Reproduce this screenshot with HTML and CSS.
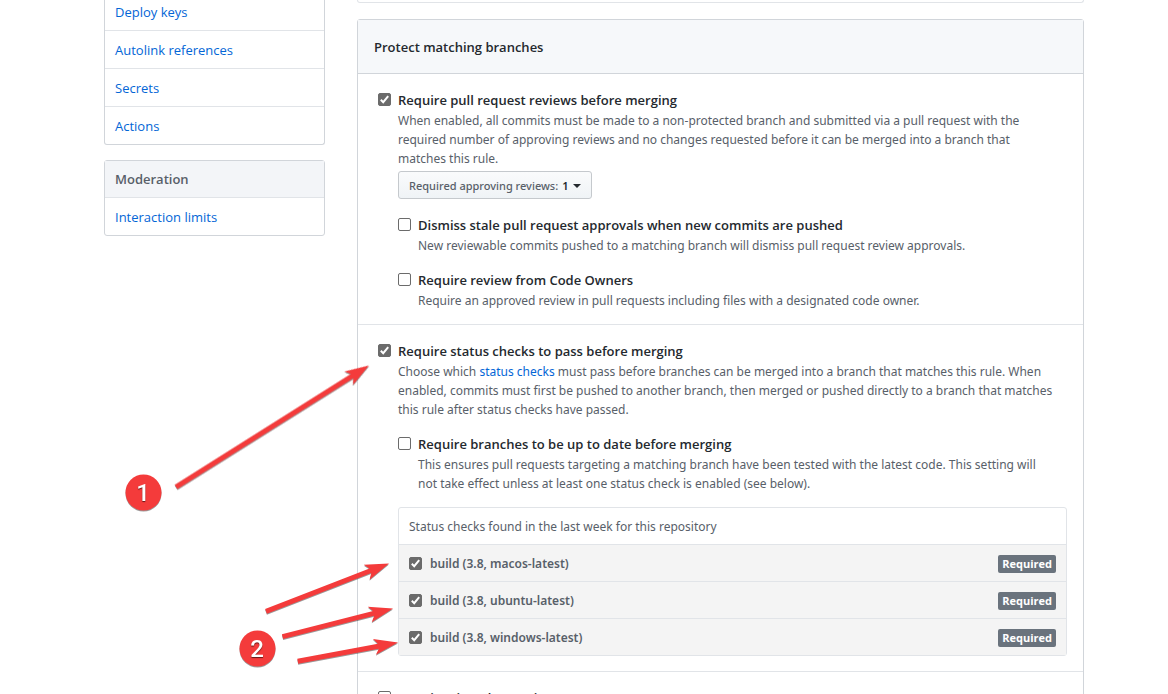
FILE: index.html
```html
<!DOCTYPE html>
<html lang="en">
<head>
<meta charset="utf-8">
<title>Branch protection rule</title>
<link rel="stylesheet" href="styles.css">
</head>
<body>
<div class="page">
  <aside class="sidebar">
    <nav class="menu menu-continued" aria-label="Settings">
      <a class="menu-item" href="#keys">Deploy keys</a>
      <a class="menu-item" href="#autolinks">Autolink references</a>
      <a class="menu-item" href="#secrets">Secrets</a>
      <a class="menu-item" href="#actions">Actions</a>
    </nav>
    <nav class="menu" aria-label="Moderation">
      <h3 class="menu-heading">Moderation</h3>
      <a class="menu-item" href="#limits">Interaction limits</a>
    </nav>
  </aside>

  <main class="content">
    <div class="previous-box"></div>
    <section class="box">
      <h2 class="box-header">Protect matching branches</h2>

      <div class="rule">
        <input class="check" type="checkbox" id="reviews" checked>
        <div class="rule-body">
          <label class="rule-label" for="reviews">Require pull request reviews before merging</label>
          <p class="note">When enabled, all commits must be made to a non-protected branch and submitted via a pull request with the<br>required number of approving reviews and no changes requested before it can be merged into a branch that<br>matches this rule.</p>
          <button class="select-button" type="button"><span>Required approving reviews:</span> <b class="count">1</b><i class="caret"></i></button>
          <div class="subrule">
            <input class="check" type="checkbox" id="stale">
            <div class="rule-body">
              <label class="rule-label" for="stale">Dismiss stale pull request approvals when new commits are pushed</label>
              <p class="note">New reviewable commits pushed to a matching branch will dismiss pull request review approvals.</p>
            </div>
          </div>
          <div class="subrule">
            <input class="check" type="checkbox" id="owners">
            <div class="rule-body">
              <label class="rule-label" for="owners">Require review from Code Owners</label>
              <p class="note">Require an approved review in pull requests including files with a designated code owner.</p>
            </div>
          </div>
        </div>
      </div>

      <div class="rule">
        <input class="check" type="checkbox" id="status" checked>
        <div class="rule-body">
          <label class="rule-label" for="status">Require status checks to pass before merging</label>
          <p class="note">Choose which <a class="link" href="#checks">status checks</a> must pass before branches can be merged into a branch that matches this rule. When<br>enabled, commits must first be pushed to another branch, then merged or pushed directly to a branch that matches<br>this rule after status checks have passed.</p>
          <div class="subrule">
            <input class="check" type="checkbox" id="uptodate">
            <div class="rule-body">
              <label class="rule-label" for="uptodate">Require branches to be up to date before merging</label>
              <p class="note">This ensures pull requests targeting a matching branch have been tested with the latest code. This setting will<br>not take effect unless at least one status check is enabled (see below).</p>
            </div>
          </div>
          <div class="checks" id="checks">
            <div class="checks-head">Status checks found in the last week for this repository</div>
            <div class="checks-row">
              <input class="check" type="checkbox" id="macos" checked>
              <label class="checks-name" for="macos">build (3.8, macos-latest)</label>
              <span class="tag">Required</span>
            </div>
            <div class="checks-row">
              <input class="check" type="checkbox" id="ubuntu" checked>
              <label class="checks-name" for="ubuntu">build (3.8, ubuntu-latest)</label>
              <span class="tag">Required</span>
            </div>
            <div class="checks-row">
              <input class="check" type="checkbox" id="windows" checked>
              <label class="checks-name" for="windows">build (3.8, windows-latest)</label>
              <span class="tag">Required</span>
            </div>
          </div>
        </div>
      </div>

      <div class="rule">
        <input class="check" type="checkbox" id="signed">
        <div class="rule-body">
          <label class="rule-label" for="signed">Require signed commits</label>
        </div>
      </div>
    </section>
  </main>

  <svg class="annotations" width="420" height="694" viewBox="0 0 420 694" aria-hidden="true">
    <g class="arrows">
      <path transform="translate(369 365.5) rotate(-32.2)" d="M0 0L-24 8L-20 2.5L-228 2.5V-2.5L-20 -2.5L-24 -8Z"/>
      <path transform="translate(389 563.5) rotate(-21.3)" d="M0 0L-24 8L-20 2.5L-132 2.5V-2.5L-20 -2.5L-24 -8Z"/>
      <path transform="translate(393 608.5) rotate(-14.3)" d="M0 0L-24 8L-20 2.5L-114 2.5V-2.5L-20 -2.5L-24 -8Z"/>
      <path transform="translate(398 642.5) rotate(-10.6)" d="M0 0L-24 8L-20 2.5L-102 2.5V-2.5L-20 -2.5L-24 -8Z"/>
      <circle cx="143.5" cy="492.5" r="18"/>
      <circle cx="257.5" cy="648.5" r="18"/>
    </g>
    <text class="marker" x="143" y="501">1</text>
    <text class="marker" x="257" y="657">2</text>
  </svg>
</div>
</body>
</html>
```
FILE: styles.css
```css
* {
  box-sizing: border-box;
}

body {
  margin: 0;
  background: #fff;
  color: #24292e;
  font: 14px/21px "Open Sans", "Noto Sans", sans-serif;
}

h2,
h3,
p {
  margin: 0;
}

.page {
  position: relative;
  display: grid;
  grid-template-columns: 221px 1fr;
  gap: 32px;
  height: 100vh;
  padding: 0 84px 0 104px;
  overflow: hidden;
}

.menu {
  margin-bottom: 15px;
  border: 1px solid #d1d5da;
  border-radius: 3px;
  font-size: 13px;
}

.menu-continued {
  border-top: 0;
  border-radius: 0 0 3px 3px;
}

.menu-item,
.menu-heading {
  display: block;
  padding: 9px 10px 7px;
  border-bottom: 1px solid #e1e4e8;
}

.menu-item {
  color: #0366d6;
  text-decoration: none;
}

.menu-item:last-child {
  border-bottom: 0;
}

.menu-continued .menu-item:first-child {
  padding-top: 2px;
}

.menu-heading {
  padding: 8px 10px 7px;
  background: #f3f5f8;
  color: #586069;
  font-size: 13px;
  font-weight: 600;
}

.previous-box {
  height: 3px;
  margin-bottom: 16px;
  border: 1px solid #e1e4e8;
  border-top: 0;
  border-radius: 0 0 3px 3px;
}

.box {
  border: 1px solid #d1d5da;
  border-radius: 3px;
}

.box-header {
  padding: 17px 16px 15px;
  border-bottom: 1px solid #d1d5da;
  background: #f6f8fa;
  font-size: 13px;
  font-weight: 600;
}

.rule {
  display: flex;
  padding: 16px 16px 14px 20px;
}

.rule + .rule {
  border-top: 1px solid #e1e4e8;
}

.rule-body {
  flex: 1;
  min-width: 0;
}

.check {
  appearance: none;
  flex: none;
  width: 13px;
  height: 13px;
  margin: 3px 7px 0 0;
  border: 1px solid #6b6b6b;
  border-radius: 2px;
  background: #fff;
}

.check:checked {
  background: #6b6b6b url("data:image/svg+xml,%3Csvg xmlns='http://www.w3.org/2000/svg' viewBox='0 0 11 11'%3E%3Cpath d='M1.8 5.8L4.2 8.2L9.2 2.2' fill='none' stroke='white' stroke-width='2'/%3E%3C/svg%3E") center / 11px 11px no-repeat;
}

.rule-label {
  display: block;
  font-size: 13px;
  font-weight: 600;
}

.note {
  color: #586069;
  font-family: "Noto Sans", "Open Sans", sans-serif;
  font-size: 12px;
  line-height: 19px;
  white-space: nowrap;
}

.link {
  color: #0366d6;
  text-decoration: none;
}

.select-button {
  display: flex;
  align-items: center;
  height: 28px;
  margin: 3px 0 16px;
  padding: 1px 10px 0;
  border: 1px solid #c5c9cd;
  border-radius: 3px;
  background: linear-gradient(#fafbfc, #eff3f6);
  color: #586069;
  font: 500 11px/20px "Noto Sans", "Open Sans", sans-serif;
}

.count {
  margin-left: 4px;
  color: #24292e;
  font-weight: 600;
}

.caret {
  margin-left: 4px;
  border: 4px solid transparent;
  border-top-color: #24292e;
  border-bottom: 0;
}

.subrule {
  display: flex;
  margin-top: 15px;
}

.select-button + .subrule {
  margin-top: 0;
}

.checks {
  margin: 14px 0 1px;
  border: 1px solid #e1e4e8;
  border-radius: 3px;
  color: #586069;
  font-family: "Noto Sans", "Open Sans", sans-serif;
}

.checks-head {
  padding: 8px 10px 7px;
  font-size: 12px;
}

.checks-row {
  display: flex;
  align-items: center;
  padding: 8px 10px 7px;
  border-top: 1px solid #e1e4e8;
  background: #f4f4f4;
}

.checks-row .check {
  margin: 0 8px 0 0;
}

.checks-name {
  flex: 1;
  font-size: 12px;
  font-weight: 600;
}

.tag {
  padding: 0 4px;
  border-radius: 2px;
  background: #6a737d;
  color: #fff;
  font: 700 11px/18px "Open Sans", "Noto Sans", sans-serif;
}

.annotations {
  position: absolute;
  top: 0;
  left: 0;
  pointer-events: none;
}

.arrows {
  fill: #f43b3b;
  filter: drop-shadow(0 1px 0 rgba(0, 0, 0, 0.4));
}

.marker {
  fill: #fff;
  font: 500 24px Roboto, "Liberation Sans", sans-serif;
  text-anchor: middle;
  text-shadow: 0 1px 1px rgba(0, 0, 0, 0.6);
}
```
